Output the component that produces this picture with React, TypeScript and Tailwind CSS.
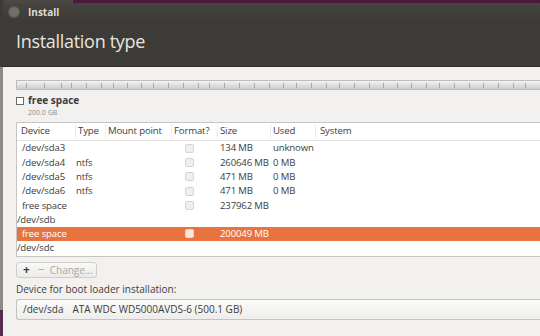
import React from 'react';

interface Row {
  device: string;
  type?: string;
  size?: string;
  used?: string;
  check?: boolean;
  indent?: boolean;
  selected?: boolean;
}

const rows: Row[] = [
  { device: '/dev/sda3', size: '134 MB', used: 'unknown', check: true, indent: true },
  { device: '/dev/sda4', type: 'ntfs', size: '260646 MB', used: '0 MB', check: true, indent: true },
  { device: '/dev/sda5', type: 'ntfs', size: '471 MB', used: '0 MB', check: true, indent: true },
  { device: '/dev/sda6', type: 'ntfs', size: '471 MB', used: '0 MB', check: true, indent: true },
  { device: 'free space', size: '237962 MB', check: true, indent: true },
  { device: '/dev/sdb' },
  { device: 'free space', size: '200049 MB', check: true, indent: true, selected: true },
  { device: '/dev/sdc' },
];

const ticks = [9, 27, 44, 54, 69, 84, 96, 110, 124, 136, 151, 166, 181, 192, 207, 222, 237, 252, 266, 279, 294, 309, 322, 337, 352, 366, 380, 394, 409, 422, 437, 452, 466, 481, 496, 508];

const cols = 'grid grid-cols-[58px_30px_66px_46px_53px_45px_1fr] whitespace-nowrap text-[9.6px] tracking-[-0.15px]';

const App = () => {
  return (
    <div className="w-[540px] h-[336px] overflow-hidden bg-[#3c3b37] flex font-['Open_Sans',sans-serif] text-[10px] text-[#3c3c3c]">
      <div className="w-[3px] flex flex-col shrink-0">
        <div className="h-[67px] bg-[#3c3b37]" />
        <div className="flex-1 bg-[#8d8a86]" />
        <div className="h-[26px] bg-[#5a2a4e]" />
      </div>
      <div className="flex-1 flex flex-col">
        <div className="bg-[#3c3b37] rounded-tl-[6px] flex flex-col h-[67px] border-b border-[#2e2d2a]">
          <div className="h-[3px] flex">
            <div className="w-[70px] bg-[#4a4945]" />
            <div className="flex-1 bg-[#4b1a3a]" />
          </div>
          <div className="h-[18px] flex items-center gap-[8px] pl-[5px] bg-gradient-to-b from-[#45443f] to-[#3c3b37]">
            <div className="w-[12px] h-[12px] rounded-full bg-[#6f6e69] border border-[#55544f]" />
            <span className="text-[#dfdbd2] font-bold text-[10px]">Install</span>
          </div>
          <div className="flex-1 flex items-center pl-[13px] pb-[4px]">
            <span className="text-[#e8e5df] text-[18px] tracking-[-0.3px]">Installation type</span>
          </div>
        </div>

        <div className="flex-1 bg-[#f2f1f0] flex flex-col pl-[13px]">
          <div className="mt-[13px] h-[10px] flex border border-r-0 border-[#bdbcba] bg-gradient-to-b from-[#f4f4f4] via-[#e0e0e0] to-[#cccccc] relative">
            {ticks.map((t) => (
              <div key={t} className="absolute top-[2px] bottom-[1px] w-px bg-[#a9a9a9]" style={{ left: t }} />
            ))}
          </div>

          <div className="mt-[5px] flex items-start gap-[4px]">
            <div className="mt-[2px] w-[8px] h-[8px] border border-[#6b6b6b] bg-white" />
            <div className="flex flex-col">
              <span className="font-bold text-[10px] leading-[11px] text-[#3c3c3c]">free space</span>
              <span className="mt-[2px] text-[7px] leading-[9px] text-[#8f8f8f]">200.0 GB</span>
            </div>
          </div>

          <div className="mt-[5px] h-[135px] bg-white border border-r-0 border-[#c6c5c2] flex flex-col">
            <div className={`${cols} h-[18px] items-center border-b border-[#e2e1df]`}>
              <span className="pl-[4px]">Device</span>
              <span className="pl-[2px] border-l border-[#ececec]">Type</span>
              <span className="pl-[2px] border-l border-[#ececec]">Mount point</span>
              <span className="pl-[2px] border-l border-[#ececec]">Format?</span>
              <span className="pl-[2px] border-l border-[#ececec]">Size</span>
              <span className="pl-[2px] border-l border-[#ececec]">Used</span>
              <span className="pl-[4px] border-l border-[#ececec]">System</span>
            </div>
            {rows.map((r, i) => (
              <div
                key={i}
                className={`${cols} h-[14.3px] items-center leading-none ${r.selected ? 'bg-[#e9733f] text-white' : ''}`}
              >
                <span className={r.indent ? 'pl-[5px]' : 'pl-0'}>{r.device}</span>
                <span className="pl-[1px]">{r.type}</span>
                <span />
                <span className="flex pl-[14px]">
                  {r.check && (
                    <span
                      className={`w-[9px] h-[9px] rounded-[2px] border ${
                        r.selected ? 'border-[#f3d4c4] bg-[#f6e6dd]' : 'border-[#d6d5d3] bg-[#f0efee]'
                      }`}
                    />
                  )}
                </span>
                <span className="pl-[3px]">{r.size}</span>
                <span className="pl-[3px]">{r.used}</span>
                <span />
              </div>
            ))}
          </div>

          <div className="mt-[5px] w-[81px] h-[16px] flex items-center border border-[#d0cfcc] rounded-[3px] bg-gradient-to-b from-[#f8f8f7] to-[#ecebea]">
            <span className="pl-[6px] text-[12px] font-bold leading-none text-[#3c3c3c]">+</span>
            <span className="pl-[8px] text-[12px] leading-none text-[#a8a7a5]">−</span>
            <span className="pl-[5px] text-[#a8a7a5]">Change...</span>
          </div>

          <div className="mt-[6px] leading-none">Device for boot loader installation:</div>

          <div className="mt-[5px] h-[21px] flex items-center gap-[9px] pl-[6px] border border-r-0 border-[#c4c3c0] rounded-l-[3px] bg-gradient-to-b from-[#fafaf9] to-[#eeedec]">
            <span>/dev/sda</span>
            <span>ATA WDC WD5000AVDS-6 (500.1 GB)</span>
          </div>
        </div>
      </div>
    </div>
  );
};

export default App;
